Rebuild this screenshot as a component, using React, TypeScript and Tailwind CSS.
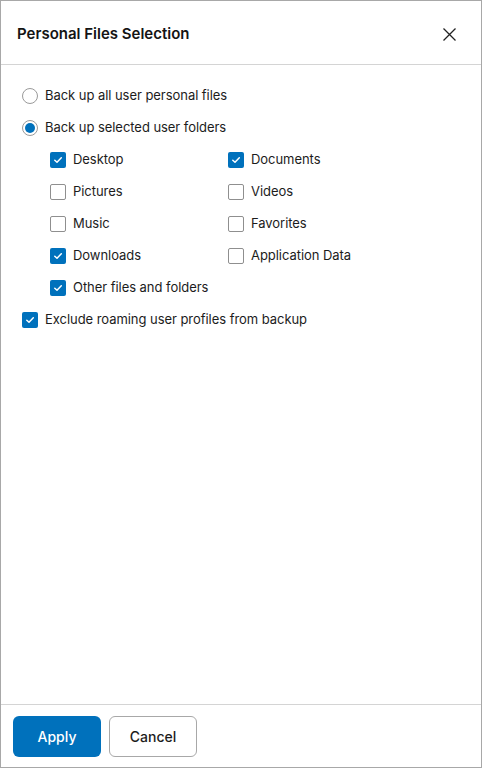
import React from "react";

const BLUE = "bg-[#0071bc]";

function Check({ checked }: { checked: boolean }) {
  return checked ? (
    <span className={`w-4 h-4 rounded-[2px] ${BLUE} flex items-center justify-center shrink-0`}>
      <svg width="10" height="8" viewBox="0 0 10 8" fill="none">
        <path d="M1.8 4.2 L4 6.2 L8.3 1.8" stroke="white" strokeWidth="1.5" strokeLinecap="round" strokeLinejoin="round" />
      </svg>
    </span>
  ) : (
    <span className="w-4 h-4 rounded-[2px] border border-[#8f8f8f] bg-white shrink-0" />
  );
}

function Radio({ checked }: { checked: boolean }) {
  return (
    <span className="w-4 h-4 rounded-full border border-[#9a9a9a] bg-white flex items-center justify-center shrink-0">
      {checked && <span className={`w-[10px] h-[10px] rounded-full ${BLUE}`} />}
    </span>
  );
}

function CheckRow({ label, checked }: { label: string; checked: boolean }) {
  return (
    <div className="h-8 flex items-center gap-[7px]">
      <Check checked={checked} />
      <span className="text-[13px] tracking-[-0.05px] text-[#1c1c1c]">{label}</span>
    </div>
  );
}

export default function App() {
  const items: [string, boolean][] = [
    ["Desktop", true],
    ["Documents", true],
    ["Pictures", false],
    ["Videos", false],
    ["Music", false],
    ["Favorites", false],
    ["Downloads", true],
    ["Application Data", false],
    ["Other files and folders", true],
  ];
  return (
    <div
      className="w-[482px] h-[768px] border border-[#a8a8a8] bg-white flex flex-col"
      style={{ fontFamily: "Inter, 'Noto Sans', sans-serif" }}
    >
      <div className="h-[64px] border-b border-[#d4d4d4] flex items-center justify-between pl-[16px] pr-[25px] pt-[3px] shrink-0">
        <span className="text-[15px] font-semibold text-[#141414]">Personal Files Selection</span>
        <svg width="13" height="13" viewBox="0 0 13 13">
          <path d="M0.5 0.5 L12.5 12.5 M12.5 0.5 L0.5 12.5" stroke="#222" strokeWidth="1.3" />
        </svg>
      </div>
      <div className="flex-1 pt-[15px] pl-[21px]">
        <div className="h-8 flex items-center gap-[7px]">
          <Radio checked={false} />
          <span className="text-[13px] tracking-[-0.05px] text-[#1c1c1c]">Back up all user personal files</span>
        </div>
        <div className="h-8 flex items-center gap-[7px]">
          <Radio checked={true} />
          <span className="text-[13px] tracking-[-0.05px] text-[#1c1c1c]">Back up selected user folders</span>
        </div>
        <div className="pl-[28px] grid grid-cols-[178px_1fr]">
          {items.map(([l, c]) => (
            <CheckRow key={l} label={l} checked={c} />
          ))}
        </div>
        <CheckRow label="Exclude roaming user profiles from backup" checked={true} />
      </div>
      <div className="h-[63px] border-t border-[#d4d4d4] flex items-start gap-2 pl-[12px] pt-[11px] shrink-0">
        <button className={`w-[88px] h-[41px] rounded-[6px] ${BLUE} text-white text-[14px] font-medium`}>Apply</button>
        <button className="w-[88px] h-[41px] rounded-[6px] border border-[#a8a8a8] bg-white text-[#1c1c1c] text-[14px] font-medium">Cancel</button>
      </div>
    </div>
  );
}
